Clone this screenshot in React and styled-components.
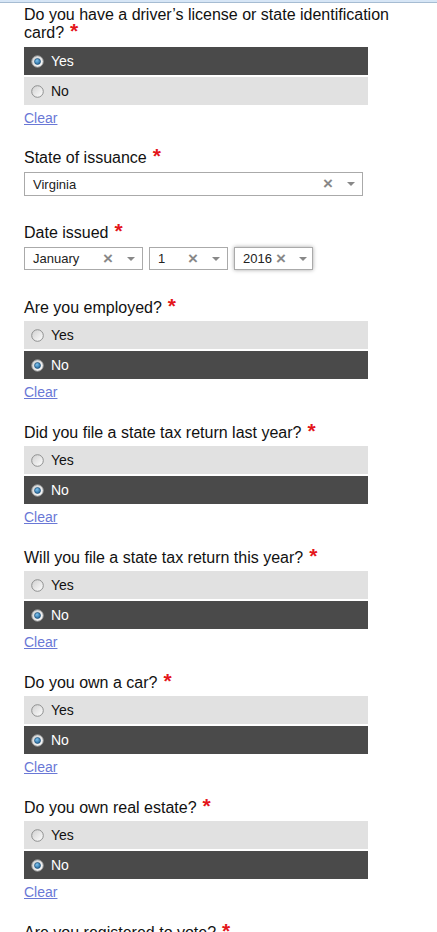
import styled, { createGlobalStyle } from "styled-components"

const Global = createGlobalStyle`
    body{
        margin:0;
        background:#fff;
        font-family:"Liberation Sans", Arial, sans-serif;
        color:#111;
    }
`
const TopStrip = styled.div`
    height:2px;
    background:#d7e6f6;
    border-bottom:1px solid #a6bcd2;
`
const Form = styled.div`
    width:380px;
    padding:3px 0 0 24px;
`
const Section = styled.div`
    margin-bottom:${(p) => p.$gap || 23}px;
`
const Question = styled.div`
    font-size:16px;
    line-height:18px;
    color:#111;
    margin-bottom:${(p) => p.$mb || 4}px;
`
const Star = styled.span`
    color:#e4161b;
    font-size:21px;
    font-weight:bold;
    line-height:0;
    margin-left:6px;
`
const Options = styled.div`
    width:344px;
    display:flex;
    flex-direction:column;
    gap:2px;
`
const Option = styled.div`
    height:28px;
    display:flex;
    align-items:center;
    padding-left:7px;
    gap:7px;
    font-size:14px;
    background:${(p) => (p.$on ? "#4a4a4a" : "#e1e1e1")};
    color:${(p) => (p.$on ? "#fff" : "#111")};
`
const Clear = styled.a`
    display:inline-block;
    margin-top:5px;
    font-size:14px;
    line-height:17px;
    color:#6a78d6;
    text-decoration:underline;
    cursor:pointer;
`
const SelectRow = styled.div`
    display:flex;
    gap:6px;
`
const Select = styled.div`
    width:${(p) => p.$w}px;
    height:${(p) => p.$h || 24}px;
    box-sizing:border-box;
    border:1px solid #aaa;
    background:#fff;
    display:flex;
    align-items:center;
    padding:0 7px 0 8px;
    font-size:13px;
    color:#222;
    box-shadow:${(p) => (p.$focus ? "0 0 4px rgba(0,0,0,0.35)" : "none")};
`
const SelectText = styled.span`
    flex:1;
`
const ClearX = styled.span`
    color:#888;
    font-size:17px;
    font-weight:bold;
    width:12px;
    margin-left:4px;
    text-align:center;
`
const Arrow = styled.span`
    width:0;
    height:0;
    margin-left:13px;
    border-left:4px solid transparent;
    border-right:4px solid transparent;
    border-top:4px solid #888;
`

function Radio({ on }) {
    return (
        <svg width="13" height="13" viewBox="0 0 13 13">
            <defs>
                <linearGradient id="rg" x1="0" y1="0" x2="1" y2="1">
                    <stop offset="0" stopColor="#cfcfcf" />
                    <stop offset="1" stopColor="#ffffff" />
                </linearGradient>
                <radialGradient id="dot" cx="0.4" cy="0.35" r="0.7">
                    <stop offset="0" stopColor="#7fc4ef" />
                    <stop offset="1" stopColor="#1d5f93" />
                </radialGradient>
            </defs>
            <circle cx="6.5" cy="6.5" r="5.8" fill="url(#rg)" stroke="#8e8f8f" strokeWidth="1" />
            {on && <circle cx="6.5" cy="6.5" r="3" fill="url(#dot)" stroke="#16466e" strokeWidth="0.6" />}
        </svg>
    )
}

function YesNo({ label, value, gap, mb }) {
    return (
        <Section $gap={gap}>
            <Question $mb={mb}>{label}<Star>*</Star></Question>
            <Options>
                {["Yes", "No"].map((o) => (
                    <Option key={o} $on={value === o}>
                        <Radio on={value === o} />
                        {o}
                    </Option>
                ))}
            </Options>
            <Clear>Clear</Clear>
        </Section>
    )
}

function Dropdown({ text, w, h, focus }) {
    return (
        <Select $w={w} $h={h} $focus={focus}>
            <SelectText>{text}</SelectText>
            <ClearX>×</ClearX>
            <Arrow />
        </Select>
    )
}

export default function App() {
    return (
        <>
            <Global />
            <TopStrip />
            <Form>
                <YesNo label="Do you have a driver’s license or state identification card?" value="Yes" mb={5} gap={22} />
                <Section $gap={28}>
                    <Question $mb={5}>State of issuance<Star>*</Star></Question>
                    <Dropdown text="Virginia" w={339} />
                </Section>
                <Section $gap={29}>
                    <Question $mb={5}>Date issued<Star>*</Star></Question>
                    <SelectRow>
                        <Dropdown text="January" w={119} h={23} />
                        <Dropdown text="1" w={79} h={23} />
                        <Dropdown text="2016" w={79} h={23} focus />
                    </SelectRow>
                </Section>
                <YesNo label="Are you employed?" value="No" />
                <YesNo label="Did you file a state tax return last year?" value="No" />
                <YesNo label="Will you file a state tax return this year?" value="No" />
                <YesNo label="Do you own a car?" value="No" />
                <YesNo label="Do you own real estate?" value="No" />
                <YesNo label="Are you registered to vote?" value="No" />
            </Form>
        </>
    )
}
